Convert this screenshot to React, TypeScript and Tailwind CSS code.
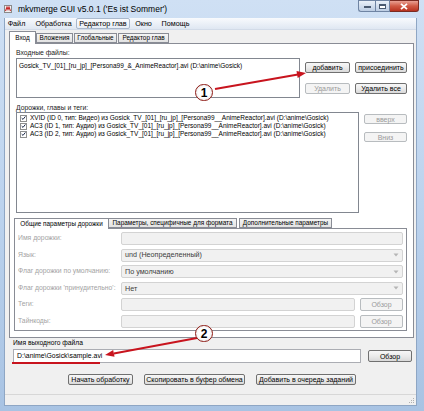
import React from 'react'

const btn =
  'flex items-center justify-center rounded-[2px] border border-[#707070] bg-linear-to-b from-[#f7f7f7] via-[#ebebeb] to-[#d9d9d9] text-[7px] leading-none text-black whitespace-nowrap'
const btnOff =
  'flex items-center justify-center rounded-[2px] border border-[#b8bcbf] bg-[#f4f4f4] text-[7px] leading-none text-[#9a9a9a] whitespace-nowrap'

function Check() {
  return (
    <span className="w-[7px] h-[7px] border border-[#8e8f8f] bg-white flex items-center justify-center shrink-0">
      <svg width="6" height="6" viewBox="0 0 6 6">
        <path d="M0.8 3.1 L2.4 4.7 L5.3 1.1" stroke="#1c2a4a" strokeWidth="1.2" fill="none" />
      </svg>
    </span>
  )
}

function Arrow() {
  return (
    <svg width="6" height="4" viewBox="0 0 6 4" className="mr-[3px]">
      <path d="M0.5 0.5 L5.5 0.5 L3 3.5 Z" fill="#b5b5b5" />
    </svg>
  )
}

const TRACKS = [
  'XVID (ID 0, тип: Видео) из Gosick_TV_[01]_[ru_jp]_[Persona99__AnimeReactor].avi (D:\\anime\\Gosick)',
  'AC3 (ID 1, тип: Аудио) из Gosick_TV_[01]_[ru_jp]_[Persona99__AnimeReactor].avi (D:\\anime\\Gosick)',
  'AC3 (ID 2, тип: Аудио) из Gosick_TV_[01]_[ru_jp]_[Persona99__AnimeReactor].avi (D:\\anime\\Gosick)',
]

function TitleBar() {
  return (
    <div className="h-[18px] flex items-start shrink-0">
      <svg width="8" height="8" viewBox="0 0 8 8" className="ml-[4px] mt-[5px]">
        <rect x="0.5" y="0.5" width="7" height="7" fill="#f2f2f2" stroke="#8a8a8a" />
        <path d="M1.5 6 L3 2 L4 4.5 L5 2 L6.5 6" stroke="#c62828" strokeWidth="1.1" fill="none" />
      </svg>
      <span className="ml-[6px] mt-[4px] text-[8.5px] leading-[10px] text-black whitespace-nowrap">
        mkvmerge GUI v5.0.1 ('Es ist Sommer')
      </span>
      <div className="ml-auto mr-[5px] flex h-[12px]">
        <div className="w-[17px] h-full rounded-bl-[3px] border border-[#6f84a3] border-r-0 bg-linear-to-b from-[#e9f0f8] to-[#bccde3] flex items-end justify-center pb-[3px]">
          <span className="w-[7px] h-[2px] bg-white border border-[#4a5a70]" />
        </div>
        <div className="w-[15px] h-full border border-[#6f84a3] bg-linear-to-b from-[#e9f0f8] to-[#bccde3] flex items-center justify-center">
          <span className="w-[7px] h-[5px] border border-[#4a5a70] border-t-2 bg-white" />
        </div>
        <div className="w-[29px] h-full rounded-br-[3px] border border-[#7b2b22] border-l-0 bg-linear-to-b from-[#e8a093] via-[#d05a45] to-[#b8321f] flex items-center justify-center">
          <svg width="8" height="7" viewBox="0 0 8 7">
            <path d="M1 0.8 L7 6.2 M7 0.8 L1 6.2" stroke="#ffffff" strokeWidth="1.8" />
          </svg>
        </div>
      </div>
    </div>
  )
}

function MenuBar() {
  const item = 'h-[11px] flex items-center justify-center text-[7.2px] leading-none whitespace-nowrap border'
  return (
    <div className="h-[12px] flex items-center bg-linear-to-b from-[#f8fafd] to-[#dfe7f2] border-b border-[#d2dbe8] shrink-0">
      <span className={`${item} w-[23px] border-transparent`}>Файл</span>
      <span className={`${item} w-[43px] ml-[4px] border-transparent`}>Обработка</span>
      <span className={`${item} w-[54px] ml-[1px] border-[#a9b8cc] rounded-[2px] bg-linear-to-b from-[#fbfcfe] to-[#e8eef6]`}>
        Редактор глав
      </span>
      <span className={`${item} w-[25px] ml-[1px] border-transparent`}>Окно</span>
      <span className={`${item} w-[37px] ml-[1px] border-transparent`}>Помощь</span>
    </div>
  )
}

function Field({ value, select, browse }: { value?: string; select?: boolean; browse?: boolean }) {
  return (
    <div className="flex-1 flex h-[13px]">
      <div className="flex-1 h-full rounded-[2px] border border-[#d3d3d3] bg-[#f1f1f1] flex items-center pl-[3px] text-[7.2px] leading-none text-[#3c3c3c]">
        <span className="flex-1 whitespace-nowrap">{value}</span>
        {select && <Arrow />}
      </div>
      {browse && <div className={`${btnOff} w-[43px] h-full ml-[5px]`}>Обзор</div>}
    </div>
  )
}

function SubPanel() {
  const rows: { label: string; value?: string; select?: boolean; browse?: boolean }[] = [
    { label: 'Имя дорожки:' },
    { label: 'Язык:', value: 'und (Неопределенный)', select: true },
    { label: 'Флаг дорожки по умолчанию:', value: 'По умолчанию', select: true },
    { label: "Флаг дорожки 'принудительно':", value: 'Нет', select: true },
    { label: 'Теги:', browse: true },
    { label: 'Тайнкоды:', browse: true },
  ]
  const tab = 'flex items-center justify-center text-[6.4px] leading-none whitespace-nowrap border border-[#898c95]'
  return (
    <div className="-ml-[2px]">
      <div className="flex items-end h-[11px]">
        <div className={`${tab} w-[95px] h-[11px] border-b-0 bg-white -mb-[1px] relative`}>Общие параметры дорожки</div>
        <div className={`${tab} w-[128px] h-[10px] border-l-0 bg-linear-to-b from-[#f4f4f4] to-[#e3e3e3]`}>
          Параметры, специфичные для формата
        </div>
        <div className={`${tab} w-[93px] h-[10px] ml-[2px] bg-linear-to-b from-[#f4f4f4] to-[#e3e3e3]`}>
          Дополнительные параметры
        </div>
      </div>
      <div className="border border-[#898c95] bg-white pt-[3px] pb-[2px] pl-[3px] pr-[3px] flex flex-col gap-[3.6px]">
        {rows.map((r) => (
          <div key={r.label} className="flex items-center">
            <span className="w-[103px] text-[6.8px] leading-none text-[#a3a3a3] whitespace-nowrap">{r.label}</span>
            <Field value={r.value} select={r.select} browse={r.browse} />
          </div>
        ))}
      </div>
    </div>
  )
}

function Notebook() {
  const tab = 'flex items-center justify-center text-[6.4px] leading-none whitespace-nowrap border border-[#898c95]'
  return (
    <div className="ml-[4px] mr-[2px] shrink-0">
      <div className="flex items-end h-[13px]">
        <div className={`${tab} w-[27px] h-[13px] border-b-0 bg-white -mb-[1px] relative`}>Вход</div>
        <div className={`${tab} w-[37px] h-[10px] bg-linear-to-b from-[#f5f5f5] to-[#e2e2e2]`}>Вложения</div>
        <div className={`${tab} w-[43px] h-[10px] ml-[1px] bg-linear-to-b from-[#f5f5f5] to-[#e2e2e2]`}>Глобальные</div>
        <div className={`${tab} w-[51px] h-[10px] ml-[1px] bg-linear-to-b from-[#f5f5f5] to-[#e2e2e2]`}>Редактор глав</div>
      </div>
      <div className="h-[295px] border border-[#898c95] bg-white px-[6px]">
        <div className="mt-[4px] h-[9px] text-[6.8px] leading-[9px] text-[#222]">Входные файлы:</div>
        <div className="mt-[1px] flex">
          <div className="w-[285px] h-[40px] border border-[#828790] bg-white pt-[2px] pl-[2px]">
            <div className="h-[9px] text-[6.5px] leading-[9px] whitespace-nowrap">
              Gosick_TV_[01]_[ru_jp]_[Persona99_&amp;_AnimeReactor].avi (D:\anime\Gosick)
            </div>
          </div>
          <div className="ml-[5px] pt-[4px] grid grid-cols-[45px_52px] gap-x-[5px] gap-y-[5px]">
            <div className={`${btn} h-[11px]`}>добавить</div>
            <div className={`${btn} h-[11px]`}>присоединить</div>
            <div className={`${btnOff} h-[11px]`}>Удалить</div>
            <div className={`${btn} h-[11px]`}>Удалить все</div>
          </div>
        </div>
        <div className="mt-[5px] h-[9px] text-[6.8px] leading-[9px] text-[#222]">Дорожки, главы и теги:</div>
        <div className="flex">
          <div className="w-[344px] h-[101px] border border-[#828790] bg-white pt-[1px] pl-[3px] overflow-hidden">
            {TRACKS.map((t) => (
              <div key={t} className="h-[8px] flex items-center gap-[3px]">
                <Check />
                <span className="text-[6.5px] leading-none whitespace-nowrap">{t}</span>
              </div>
            ))}
          </div>
          <div className="ml-[5px] pt-[2px] flex flex-col gap-[8px]">
            <div className={`${btnOff} w-[43px] h-[10px]`}>вверх</div>
            <div className={`${btnOff} w-[43px] h-[10px]`}>Вниз</div>
          </div>
        </div>
        <div className="mt-[4px]">
          <SubPanel />
        </div>
      </div>
    </div>
  )
}

function Annotations() {
  return (
    <>
      <svg width="424" height="411" className="absolute inset-0 pointer-events-none">
        <line x1="215" y1="89" x2="298" y2="74.6" stroke="#c8141e" strokeWidth="2" />
        <polygon points="306,73 297.7,78 296.5,71.1" fill="#c8141e" />
        <line x1="197" y1="338" x2="113.8" y2="353.4" stroke="#c8141e" strokeWidth="2" />
        <polygon points="105,355 114.5,356.8 113.2,349.9" fill="#c8141e" />
        <line x1="12" y1="363" x2="100" y2="363" stroke="#c8141e" strokeWidth="2" />
      </svg>
      <div className="absolute left-[195px] top-[84px] w-[18px] h-[17px] rounded-full border-[1.5px] border-[#8e1a14] bg-radial from-white via-white to-[#d8d8d8] flex items-center justify-center text-[12px] font-bold leading-none text-black">
        1
      </div>
      <div className="absolute left-[195px] top-[325px] w-[18px] h-[17px] rounded-full border-[1.5px] border-[#8e1a14] bg-radial from-white via-white to-[#d8d8d8] flex items-center justify-center text-[12px] font-bold leading-none text-black">
        2
      </div>
    </>
  )
}

export default function App() {
  return (
    <div className="relative w-[424px] h-[411px] overflow-hidden flex flex-col bg-linear-to-b from-[#cfe0f4] via-[#bcd3ee] to-[#a8c3e3] font-['Liberation_Sans',Arial,sans-serif] text-black">
      <TitleBar />
      <div className="flex-1 ml-[4px] mr-[7px] mb-[5px] bg-[#f0f0f0] flex flex-col border border-[#8ea6c4] border-t-0">
        <MenuBar />
        <Notebook />
        <div className="ml-[8px] mt-[1px] h-[8px] text-[6.7px] leading-[8px]">Имя выходного файла</div>
        <div className="ml-[8px] mt-[2px] flex items-center">
          <div className="w-[348px] h-[14px] border border-[#abadb3] bg-white flex items-center pl-[3px] text-[6.9px] leading-none">
            D:\anime\Gosick\sample.avi
          </div>
          <div className={`${btn} w-[44px] h-[12px] ml-[7px]`}>Обзор</div>
        </div>
        <div className="mt-[11px] flex justify-center gap-[11px] pl-[3px]">
          <div className={`${btn} w-[65px] h-[11px] text-[7.1px]`}>Начать обработку</div>
          <div className={`${btn} w-[101px] h-[11px] text-[7.1px]`}>Скопировать в буфер обмена</div>
          <div className={`${btn} w-[100px] h-[11px] text-[7.1px]`}>Добавить в очередь заданий</div>
        </div>
        <div className="mt-auto h-[11px] border-t border-[#d7d7d7] flex justify-end items-end pr-[1px] pb-[1px]">
          <svg width="7" height="7" viewBox="0 0 7 7">
            <rect x="5" y="1" width="1" height="1" fill="#b0b0b0" />
            <rect x="3" y="3" width="1" height="1" fill="#b0b0b0" />
            <rect x="5" y="3" width="1" height="1" fill="#b0b0b0" />
            <rect x="1" y="5" width="1" height="1" fill="#b0b0b0" />
            <rect x="3" y="5" width="1" height="1" fill="#b0b0b0" />
            <rect x="5" y="5" width="1" height="1" fill="#b0b0b0" />
          </svg>
        </div>
      </div>
      <Annotations />
    </div>
  )
}
